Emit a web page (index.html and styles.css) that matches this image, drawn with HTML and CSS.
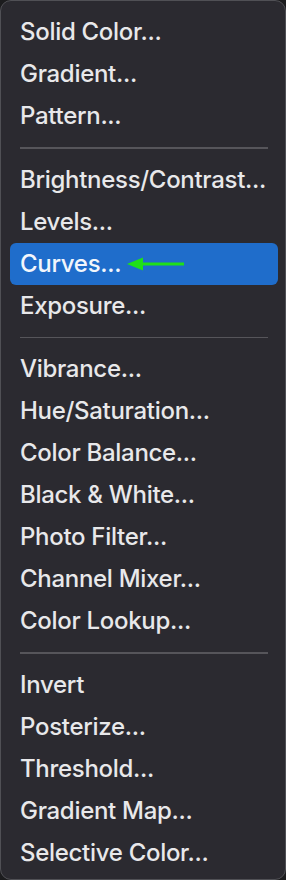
FILE: index.html
```html
<!DOCTYPE html>
<html lang="en">
<head>
    <meta charset="UTF-8">
    <title>Adjustment layer menu</title>
    <link rel="stylesheet" href="styles.css">
</head>
<body>
<div class="menu">
    <ul>
        <li>Solid Color...</li>
        <li>Gradient...</li>
        <li>Pattern...</li>
        <li class="sep"></li>
        <li>Brightness/Contrast...</li>
        <li>Levels...</li>
        <li class="current">Curves...
            <svg class="arrow" width="58" height="14" viewBox="0 0 58 14">
                <path d="M15 7H57" stroke="#1fe019" stroke-width="3"/>
                <path d="M0 7L16 0.5V13.5Z" fill="#1fe019"/>
            </svg>
        </li>
        <li>Exposure...</li>
        <li class="sep"></li>
        <li>Vibrance...</li>
        <li>Hue/Saturation...</li>
        <li>Color Balance...</li>
        <li>Black &amp; White...</li>
        <li>Photo Filter...</li>
        <li>Channel Mixer...</li>
        <li>Color Lookup...</li>
        <li class="sep"></li>
        <li>Invert</li>
        <li>Posterize...</li>
        <li>Threshold...</li>
        <li>Gradient Map...</li>
        <li>Selective Color...</li>
    </ul>
</div>
</body>
</html>
```

FILE: styles.css
```css
*{
    margin: 0;
    padding: 0;
    list-style: none;
}

body{
    background: #1c1c1e;
    width: 286px;
    height: 880px;
    overflow: hidden;
}

.menu{
    height: 880px;
    box-sizing: border-box;
    background: #2b2a30;
    border: 1px solid #505055;
    border-radius: 11px;
    padding: 10px 7px 0 9px;
    font-family: Inter, "Liberation Sans", sans-serif;
    font-size: 24px;
    font-weight: 500;
    letter-spacing: -0.3px;
    color: #e8e8ea;
}

.menu li{
    height: 42px;
    line-height: 42px;
    padding-left: 10px;
    border-radius: 6px;
    white-space: nowrap;
    display: flex;
    align-items: center;
}

.menu li.current{
    background: #1f6dcb;
    color: #f2f6fc;
}

.menu .arrow{
    margin-left: 6px;
}

.menu li.sep{
    height: 21.5px;
    padding: 0;
    margin: 0 10px;
}
.menu li.sep::after{
    content: "";
    display: block;
    width: 100%;
    height: 1.5px;
    background: #56555a;
}
```
